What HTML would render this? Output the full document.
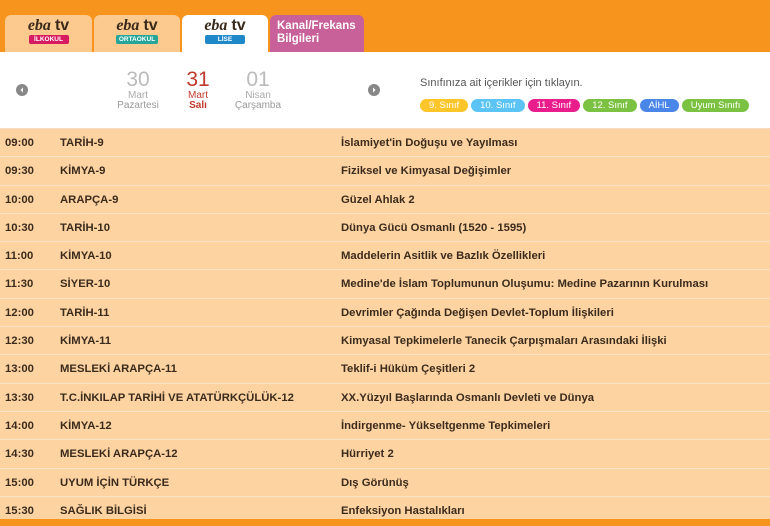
<!DOCTYPE html><html><head><meta charset="utf-8"><style>
*{margin:0;padding:0;box-sizing:border-box}
body{width:770px;height:526px;overflow:hidden;background:#fff;font-family:"Liberation Sans","DejaVu Sans",sans-serif}
.top{position:absolute;left:0;top:0;width:770px;height:52px;background:#f7941d}
.tab{position:absolute;top:15px;height:37px;border-radius:6px 6px 0 0;background:#fcc98f;text-align:center}
.logo{font-family:"Liberation Serif",serif;font-weight:bold;font-style:italic;font-size:16px;color:#3a2a1a;margin-top:3px;line-height:16px}
.logo b{font-style:normal;font-family:"Liberation Sans",sans-serif}
.badge{display:inline-block;width:40px;height:9px;border-radius:2px;font-size:6.5px;color:#fff;line-height:9px;font-weight:bold;vertical-align:top;margin-top:1px}
.panel{position:absolute;left:0;top:52px;width:770px;height:77px;background:#fff;border-bottom:1px solid #f5dcc0}
.arrow{position:absolute;top:84px;width:12px;height:12px;border-radius:50%;background:#888}
.d{position:absolute;top:69px;text-align:center;color:#aaa;font-size:10px;line-height:10px}
.d .n{font-size:21px;line-height:22px;color:#bbb}
.pill{display:inline-block;height:13px;border-radius:7px;color:#fff;font-size:9.5px;line-height:13px;padding:0 9px;margin-right:3px}
.rows{position:absolute;top:129px;left:0;width:770px}
.r{height:28.3px;background:#fdd3a2;border-bottom:1px solid #fbe3c6;position:relative;font-size:11.3px;font-weight:bold;color:#3b2b1c}
.r span{position:absolute;top:8px}
.bot{position:absolute;left:0;top:519px;width:770px;height:7px;background:#f7941d}
</style></head><body>
<div class="top"></div>
<div class="tab" style="left:5px;width:87px"><div class="logo">eba <b>tv</b></div><span class="badge" style="background:#d81b60">İLKOKUL</span></div>
<div class="tab" style="left:94px;width:86px"><div class="logo">eba <b>tv</b></div><span class="badge" style="background:#26a69a;width:42px">ORTAOKUL</span></div>
<div class="tab" style="left:182px;width:86px;background:#fff"><div class="logo">eba <b>tv</b></div><span class="badge" style="background:#1e88c8">LİSE</span></div>
<div class="tab" style="left:270px;width:94px;background:#c8609a;text-align:left;color:#fff;font-size:11.5px;font-weight:bold;padding:5px 0 0 7px;line-height:13px">Kanal/Frekans<br>Bilgileri</div>
<div class="panel"></div>
<svg class="arrow" style="left:16px" viewBox="0 0 12 12"><path d="M7 3.5L4.5 6 7 8.5z" fill="#fff"/></svg>
<svg class="arrow" style="left:368px" viewBox="0 0 12 12"><path d="M5 3.5L7.5 6 5 8.5z" fill="#fff"/></svg>
<div class="d" style="left:112px;width:52px"><div class="n">30</div>Mart<br><span style="color:#999">Pazartesi</span></div>
<div class="d" style="left:178px;width:40px;color:#c0392b"><div class="n" style="color:#c0392b">31</div>Mart<br><b>Salı</b></div>
<div class="d" style="left:230px;width:56px"><div class="n">01</div>Nisan<br><span style="color:#999">Çarşamba</span></div>
<div style="position:absolute;left:420px;top:77px;font-size:11px;color:#555">Sınıfınıza ait içerikler için tıklayın.</div>
<div style="position:absolute;left:420px;top:95px;white-space:nowrap"><span class="pill" style="background:#fcc52a">9. Sınıf</span><span class="pill" style="background:#5bc4f5">10. Sınıf</span><span class="pill" style="background:#e91e8c">11. Sınıf</span><span class="pill" style="background:#7cc242">12. Sınıf</span><span class="pill" style="background:#4a86e8">AİHL</span><span class="pill" style="background:#7cc242">Uyum Sınıfı</span></div>
<div class="rows">
<div class="r"><span style="left:5px">09:00</span><span style="left:60px">TARİH-9</span><span style="left:341px">İslamiyet'in Doğuşu ve Yayılması</span></div>
<div class="r"><span style="left:5px">09:30</span><span style="left:60px">KİMYA-9</span><span style="left:341px">Fiziksel ve Kimyasal Değişimler</span></div>
<div class="r"><span style="left:5px">10:00</span><span style="left:60px">ARAPÇA-9</span><span style="left:341px">Güzel Ahlak 2</span></div>
<div class="r"><span style="left:5px">10:30</span><span style="left:60px">TARİH-10</span><span style="left:341px">Dünya Gücü Osmanlı (1520 - 1595)</span></div>
<div class="r"><span style="left:5px">11:00</span><span style="left:60px">KİMYA-10</span><span style="left:341px">Maddelerin Asitlik ve Bazlık Özellikleri</span></div>
<div class="r"><span style="left:5px">11:30</span><span style="left:60px">SİYER-10</span><span style="left:341px">Medine'de İslam Toplumunun Oluşumu: Medine Pazarının Kurulması</span></div>
<div class="r"><span style="left:5px">12:00</span><span style="left:60px">TARİH-11</span><span style="left:341px">Devrimler Çağında Değişen Devlet-Toplum İlişkileri</span></div>
<div class="r"><span style="left:5px">12:30</span><span style="left:60px">KİMYA-11</span><span style="left:341px">Kimyasal Tepkimelerle Tanecik Çarpışmaları Arasındaki İlişki</span></div>
<div class="r"><span style="left:5px">13:00</span><span style="left:60px">MESLEKİ ARAPÇA-11</span><span style="left:341px">Teklif-i Hüküm Çeşitleri 2</span></div>
<div class="r"><span style="left:5px">13:30</span><span style="left:60px">T.C.İNKILAP TARİHİ VE ATATÜRKÇÜLÜK-12</span><span style="left:341px">XX.Yüzyıl Başlarında Osmanlı Devleti ve Dünya</span></div>
<div class="r"><span style="left:5px">14:00</span><span style="left:60px">KİMYA-12</span><span style="left:341px">İndirgenme- Yükseltgenme Tepkimeleri</span></div>
<div class="r"><span style="left:5px">14:30</span><span style="left:60px">MESLEKİ ARAPÇA-12</span><span style="left:341px">Hürriyet 2</span></div>
<div class="r"><span style="left:5px">15:00</span><span style="left:60px">UYUM İÇİN TÜRKÇE</span><span style="left:341px">Dış Görünüş</span></div>
<div class="r"><span style="left:5px">15:30</span><span style="left:60px">SAĞLIK BİLGİSİ</span><span style="left:341px">Enfeksiyon Hastalıkları</span></div>
</div>
<div class="bot"></div>
</body></html>
